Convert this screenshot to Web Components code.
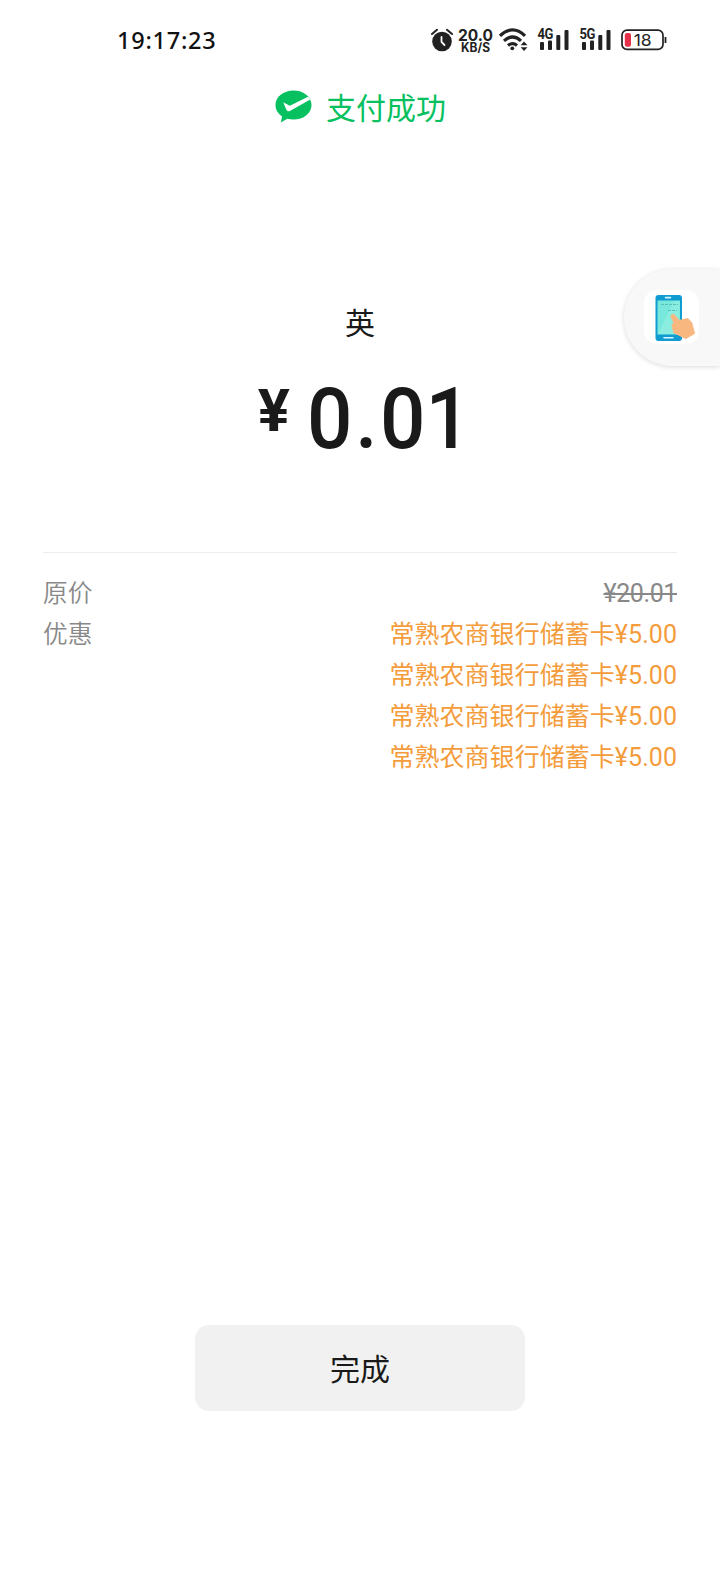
<!DOCTYPE html>
<html lang="zh-CN"><head><meta charset="utf-8"><title>支付成功</title>
<style>
html,body{margin:0;background:#fff}
body{font-family:Roboto,"Noto Sans CJK SC",sans-serif;color:#1a1a1a}
</style></head><body>
<pay-page></pay-page>
<script>
const define=(name,html)=>customElements.define(name,class extends HTMLElement{
  constructor(){super();const t=document.createElement('template');t.innerHTML=html;
    this.attachShadow({mode:'open'}).append(t.content.cloneNode(true));}
});

define('signal-bars',`<style>
:host{display:block;width:32px;height:24px}
svg{display:block;overflow:visible}
.g{display:block;font:bold 14px/10px Roboto,sans-serif;letter-spacing:-.5px;height:0;transform:translate(-.5px,1px) scaleX(.93);transform-origin:0 0;color:#222}
</style><span class="g"><slot></slot></span>
<svg width="32" height="24" fill="#222"><rect x="2" y="14" width="4" height="8" rx="1"/><rect x="10" y="12.500" width="4" height="9.500" rx="1"/><rect x="18.300" y="7" width="4" height="15" rx="1"/><rect x="26.500" y="2" width="4" height="20" rx="1"/></svg>`);

define('battery-level',`<style>
:host{display:block;width:46px;height:22px}
svg{display:block}
</style><svg width="46" height="22"><rect x="1" y="1.200" width="41" height="19.200" rx="5" fill="none" stroke="#222" stroke-width="1.700"/><path d="M44.500 8v6" stroke="#222" stroke-width="1.800"/><rect x="3.800" y="4" width="6.200" height="13.800" rx="2.200" fill="#e5304a"/><text x="12.700" y="16.600" font-family="Inter,sans-serif" font-size="16.500" textLength="18" lengthAdjust="spacingAndGlyphs" fill="#222">18</text></svg>`);

define('net-speed',`<style>
:host{display:block;width:36px;height:24px}svg{display:block;overflow:visible}
</style><svg width="36" height="24" fill="#222" font-family="Inter,sans-serif" font-weight="700"><text x="0" y="13" font-size="16.500" textLength="35" lengthAdjust="spacingAndGlyphs">20.0</text><text x="3" y="24" font-size="12.500" textLength="29" lengthAdjust="spacingAndGlyphs">KB/S</text></svg>`);

define('status-bar',`<style>
:host{display:flex;align-items:flex-start;height:80px;padding:28px 52px 0 117px;box-sizing:border-box}
.time{font:500 23.500px/25px "Noto Sans",sans-serif;letter-spacing:.75px;color:#111;width:314px;flex:none}
svg{display:block;flex:none}
.wifi{margin-left:5px}
.s1{margin-left:10px}.s2{margin-left:10px}
battery-level{margin:1px 0 0 9px}net-speed{margin-left:5px}
</style>
<div class="time">19:17:23</div>
<svg width="22" height="25"><circle cx="11" cy="13.500" r="9.800" fill="#222"/><path d="M1 6 6 1.800M21 6 16 1.800" stroke="#222" stroke-width="2" stroke-linecap="round"/><path d="M10.500 9v5l3 3" fill="none" stroke="#fff" stroke-width="1.800" stroke-linecap="round"/></svg>
<net-speed></net-speed>
<svg class="wifi" width="29" height="24" fill="none" stroke="#222" stroke-width="3.200"><path d="M.9 7.800Q13.500-4 26 7.800M5 12.900Q13.500 5 22 12.900M9 17.500Q13.500 13.700 18 17.500"/><circle cx="13.300" cy="20.300" r="1.900" fill="#222" stroke="none"/><path d="M21.700 17.300 25 13.500l3.500 3.800zM21.700 19.300 25 23l3.500-3.700z" fill="#222" stroke="none"/></svg>
<signal-bars class="s1">4G</signal-bars><signal-bars class="s2">5G</signal-bars>
<battery-level></battery-level>`);

define('success-title',`<style>
:host{display:flex;justify-content:center;align-items:flex-start;gap:14px;height:56px;color:#07c160;font:400 30px/44px "Noto Sans CJK SC",sans-serif;padding-left:1px}
svg{margin-top:10px}span{margin-top:4px}
</style><svg width="37" height="34"><path d="M18.500.5C8.300.5.5 6.900.5 15c0 4.700 2.500 8.700 6.600 11.400L5.800 32.500l6.500-3.700c2 .5 4 .8 6.200.8 10.200 0 18-6.400 18-14.600S28.700.5 18.500.5Z" fill="#07c160"/><path d="M8.200 12.200 14.800 15.800 33 6.800 35.300 9.400 15.300 20.800Q12.700 22.300 11.400 19.700Z" fill="#fff"/></svg><span><slot></slot></span>`);

define('float-entry',`<style>
:host{position:absolute;right:0;top:269px;width:96px;height:97px;box-sizing:border-box;border-radius:49px 0 0 49px;background:#f8f8f8;box-shadow:0 1px 5px rgba(0,0,0,.14);padding:21px 0 0 20px}
div{width:55px;height:54px;border-radius:13px;background:#fff;display:grid;place-items:center}
</style><div><svg width="55" height="54"><rect x="11.500" y="5" width="26.500" height="46" rx="3" fill="#109bd1"/><path d="M13.500 10.500H36V44.500H13.500Z" fill="#78e8dc"/><path d="M14 44 30 11h5.500v33z" fill="#9af0e3" opacity=".55"/><path d="M17 14.500h17M24 20.500h9" stroke="#58bfba" stroke-dasharray="3 1"/><path d="M21.500 7.600h5M20 47.700h9" stroke="#d8f5ff" stroke-width="1.600" stroke-linecap="round"/><path d="M27.300 27.500C26 25 29 23.200 31 25.400l4 5 9-1.900 3.800 4.500 2.700 10.500-8.700 5-10-4.800c-2.800-.6-2.900-2.200-1.700-3.300-2-.6-2.300-2.200-1.200-3.300-1.600-1-1.500-2.600.3-3.300l.6-1.300Z" fill="#f9b780" stroke="#f9b780" stroke-linejoin="round"/></svg></div>`);

define('pay-amount',`<style>
:host{display:block;text-align:center}
.name{font:400 30px/44px "Noto Sans CJK SC",sans-serif;padding-top:163px}
.sum{display:flex;justify-content:center;align-items:flex-start;height:86px;margin-top:33px;font-family:Roboto,sans-serif;padding-left:22px}
.yen{font-weight:700;font-size:60px;line-height:62px;margin:4px 15px 0 0;width:36px;display:flex;justify-content:center}
.num{font-weight:500;font-size:86px;line-height:86px;letter-spacing:2.900px;transform:scaleX(.93);transform-origin:0 0}
::slotted(.tail){margin-left:-3px}
</style><div class="name"><slot name="payee"></slot></div><div class="sum"><span class="yen">¥</span><span class="num"><slot></slot></span></div>`);

define('detail-row',`<style>
:host{display:flex;justify-content:space-between;font:350 25px/41px Roboto,"Noto Sans CJK SC",sans-serif;color:#888}
.label{font-size:24.700px}
.value{display:flex;flex-direction:column;align-items:flex-end;font-weight:400}
</style><span class="label"><slot name="label"></slot></span><div class="value"><slot></slot></div>`);

define('pay-button',`<style>
:host{display:block}
button{display:block;width:330px;height:86px;border:0;border-radius:14px;background:#f1f1f1;color:#1a1a1a;font:400 30px/44px "Noto Sans CJK SC",sans-serif;padding:0 0 3px}
</style><button><slot></slot></button>`);

define('pay-page',`<style>
:host{display:flex;flex-direction:column;height:1584px;position:relative;overflow:hidden;background:#fff}
.details{margin:90px 43px 0;border-top:1px solid #ededed;padding-top:20px}
.off{color:#f49c3c;white-space:nowrap;letter-spacing:.05px}
del{text-decoration-thickness:1.500px;letter-spacing:-.4px}
pay-button{margin:auto auto 173px}
</style>
<status-bar></status-bar>
<success-title>支付成功</success-title>
<pay-amount><span slot="payee">英</span>0.0<span class="tail">1</span></pay-amount>
<section class="details">
<detail-row><span slot="label">原价</span><del>¥20.01</del></detail-row>
<detail-row><span slot="label">优惠</span><span class="off">常熟农商银行储蓄卡¥5.00</span><span class="off">常熟农商银行储蓄卡¥5.00</span><span class="off">常熟农商银行储蓄卡¥5.00</span><span class="off">常熟农商银行储蓄卡¥5.00</span></detail-row>
</section>
<pay-button>完成</pay-button>
<float-entry></float-entry>`);
</script></body></html>
